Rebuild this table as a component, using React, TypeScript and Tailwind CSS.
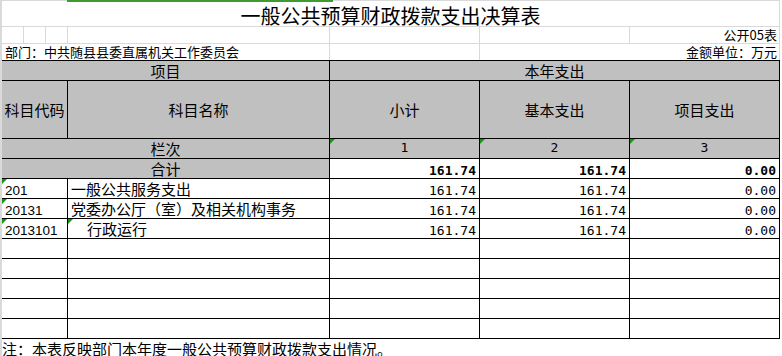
import React from "react";

const CJK = "font-['Noto_Sans_CJK_SC',sans-serif]";
const MONO = "font-['DejaVu_Sans_Mono',monospace]";
const CODE = "font-['Liberation_Sans','Noto_Sans_CJK_SC',sans-serif]";

function Tri() {
  return (
    <span className="absolute left-0 top-0 h-0 w-0 border-t-[5px] border-r-[5px] border-t-[#139a13] border-r-transparent" />
  );
}

const cell = "relative border-r border-b border-black";
const gray = "bg-[#c0c0c0]";

const rows = [
  { code: "201", name: "一般公共服务支出", indent: false, tri: false, v: ["161.74", "161.74", "0.00"] },
  { code: "20131", name: "党委办公厅（室）及相关机构事务", indent: false, tri: false, v: ["161.74", "161.74", "0.00"] },
  { code: "2013101", name: "行政运行", indent: true, tri: true, v: ["161.74", "161.74", "0.00"] },
];

export default function App() {
  return (
    <div className={`relative flex h-[356px] w-[782px] overflow-hidden bg-white text-black ${CJK}`}>
      <div className="w-[2px] shrink-0 bg-[#dadada]" />
      <div className="flex w-[778px] shrink-0 flex-col">
        {/* title row */}
        <div className="h-[27px] border-y border-r border-[#d9d9d9] pt-[5px] text-center text-[20px] leading-[20px]">
          一般公共预算财政拨款支出决算表
        </div>
        {/* row 2 */}
        <div className="flex h-[17px] border-b border-[#d9d9d9] text-[13px] leading-[16px]">
          <div className="w-[22px] border-r border-[#d9d9d9]" />
          <div className="w-[22px] border-r border-[#d9d9d9]" />
          <div className="w-[22px] border-r border-[#d9d9d9]" />
          <div className="w-[262px] border-r border-[#d9d9d9]" />
          <div className="w-[150px] border-r border-[#d9d9d9]" />
          <div className="w-[150px] border-r border-[#d9d9d9]" />
          <div className="w-[150px] border-r border-[#d9d9d9] pr-[2px] text-right">公开05表</div>
        </div>
        {/* row 3 */}
        <div className="flex h-[16px] text-[13px] leading-[16px]">
          <div className="w-[328px] whitespace-nowrap border-r border-[#d9d9d9] pl-[3px]">
            部门：中共随县县委直属机关工作委员会
          </div>
          <div className="w-[150px] border-r border-[#d9d9d9]" />
          <div className="w-[300px] border-r border-[#d9d9d9] pr-[2px] text-right">金额单位：万元</div>
        </div>
        {/* table */}
        <div className="grid grid-cols-[66px_262px_150px_150px_150px] border-t border-black text-[15px] leading-[19px]">
          <div className={`${cell} ${gray} col-span-2 flex h-[20px] items-center justify-center`}>项目</div>
          <div className={`${cell} ${gray} col-span-3 flex h-[20px] items-center justify-center`}>本年支出</div>

          <div className={`${cell} ${gray} flex h-[58px] items-center justify-center whitespace-nowrap`}>科目代码</div>
          <div className={`${cell} ${gray} flex h-[58px] items-center justify-center`}>科目名称</div>
          <div className={`${cell} ${gray} flex h-[58px] items-center justify-center`}>小计</div>
          <div className={`${cell} ${gray} flex h-[58px] items-center justify-center`}>基本支出</div>
          <div className={`${cell} ${gray} flex h-[58px] items-center justify-center`}>项目支出</div>

          <div className={`${cell} ${gray} col-span-2 flex h-[20px] items-center justify-center`}>栏次</div>
          {["1", "2", "3"].map((n) => (
            <div key={n} className={`${cell} ${gray} ${MONO} flex h-[20px] items-center justify-center pb-[3px] text-[13px]`}>
              <Tri />
              {n}
            </div>
          ))}

          <div className={`${cell} ${gray} col-span-2 flex h-[20px] items-center justify-center`}>合计</div>
          {["161.74", "161.74", "0.00"].map((n, i) => (
            <div key={i} className={`${cell} ${MONO} flex h-[20px] items-center justify-end pr-[3px] pt-[4px] text-[13px] font-bold`}>
              {n}
            </div>
          ))}

          {rows.map((r) => (
            <React.Fragment key={r.code}>
              <div className={`${cell} ${CODE} flex h-[20px] items-center pl-[3px] pt-[3px] text-[13.5px]`}>
                <Tri />
                {r.code}
              </div>
              <div className={`${cell} flex h-[20px] items-center whitespace-nowrap ${r.indent ? "pl-[19px]" : "pl-[3px]"}`}>
                {r.tri && <Tri />}
                {r.name}
              </div>
              {r.v.map((n, i) => (
                <div key={i} className={`${cell} ${MONO} flex h-[20px] items-center justify-end pr-[3px] pt-[4px] text-[13px]`}>
                  {n}
                </div>
              ))}
            </React.Fragment>
          ))}

          {[0, 1, 2, 3, 4].map((k) => (
            <React.Fragment key={`e${k}`}>
              <div className={`${cell} h-[20px]`} />
              <div className={`${cell} h-[20px]`} />
              <div className={`${cell} h-[20px]`} />
              <div className={`${cell} h-[20px]`} />
              <div className={`${cell} h-[20px]`} />
            </React.Fragment>
          ))}
        </div>
        {/* note */}
        <div className="flex h-[18px] items-center whitespace-nowrap text-[15px] leading-[19px]">
          注：本表反映部门本年度一般公共预算财政拨款支出情况。
        </div>
      </div>
      <div className="absolute left-[67px] top-0 h-[2px] w-[266px] bg-[#3f9b2f]" />
    </div>
  );
}
